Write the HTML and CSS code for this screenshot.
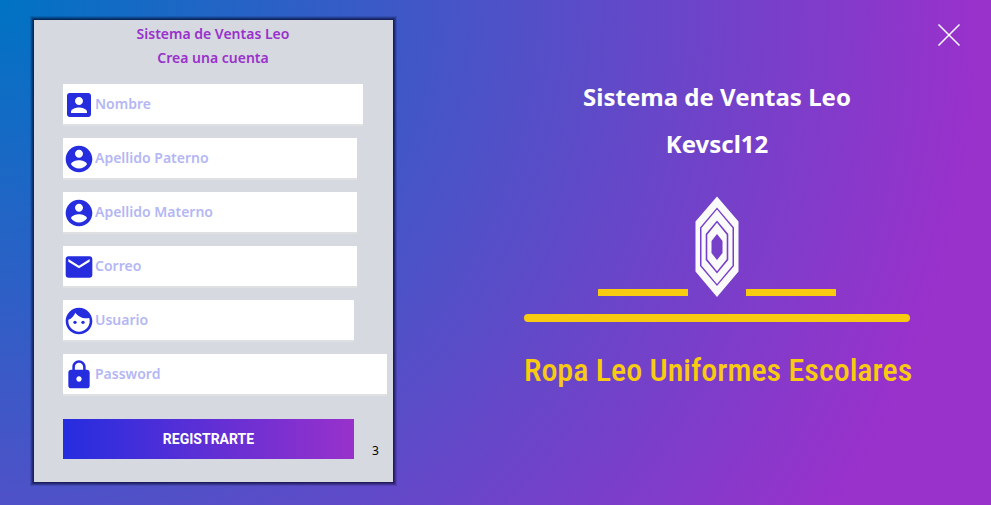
FILE: index.html
```html
<!DOCTYPE html>
<html lang="es">
<head>
<meta charset="utf-8">
<meta name="viewport" content="width=device-width, initial-scale=1">
<title>Sistema de Ventas Leo</title>
<link rel="stylesheet" href="styles.css">
</head>
<body>
<main class="page">
  <form class="card">
    <header class="card-head">
      <h2>Sistema de Ventas Leo</h2>
      <h2>Crea una cuenta</h2>
    </header>
    <div class="fields">
      <label class="field field-name">
        <svg class="icon" viewBox="0 0 24 24" aria-hidden="true"><path d="M3 5v14c0 1.100.89 2 2 2h14c1.100 0 2-.9 2-2V5c0-1.100-.9-2-2-2H5c-1.110 0-2 .9-2 2zm12 4c0 1.660-1.340 3-3 3s-3-1.340-3-3 1.340-3 3-3 3 1.340 3 3zm-9 8c0-2 4-3.100 6-3.100s6 1.100 6 3.100v1H6v-1z"/></svg>
        <input type="text" placeholder="Nombre" aria-label="Nombre">
      </label>
      <label class="field">
        <svg class="icon" viewBox="0 0 24 24" aria-hidden="true"><path d="M12 2C6.480 2 2 6.480 2 12s4.480 10 10 10 10-4.480 10-10S17.520 2 12 2zm0 3c1.660 0 3 1.340 3 3s-1.340 3-3 3-3-1.340-3-3 1.340-3 3-3zm0 14.200c-2.500 0-4.710-1.280-6-3.220.03-1.990 4-3.080 6-3.080 1.990 0 5.970 1.090 6 3.080-1.290 1.940-3.500 3.220-6 3.220z"/></svg>
        <input type="text" placeholder="Apellido Paterno" aria-label="Apellido Paterno">
      </label>
      <label class="field">
        <svg class="icon" viewBox="0 0 24 24" aria-hidden="true"><path d="M12 2C6.480 2 2 6.480 2 12s4.480 10 10 10 10-4.480 10-10S17.520 2 12 2zm0 3c1.660 0 3 1.340 3 3s-1.340 3-3 3-3-1.340-3-3 1.340-3 3-3zm0 14.200c-2.500 0-4.710-1.280-6-3.220.03-1.990 4-3.080 6-3.080 1.990 0 5.970 1.090 6 3.080-1.290 1.940-3.500 3.220-6 3.220z"/></svg>
        <input type="text" placeholder="Apellido Materno" aria-label="Apellido Materno">
      </label>
      <label class="field">
        <svg class="icon" viewBox="0 0 24 24" aria-hidden="true"><path d="M20 4H4c-1.100 0-1.990.9-1.990 2L2 18c0 1.100.9 2 2 2h16c1.100 0 2-.9 2-2V6c0-1.100-.9-2-2-2zm0 4l-8 5-8-5V6l8 5 8-5v2z"/></svg>
        <input type="email" placeholder="Correo" aria-label="Correo">
      </label>
      <label class="field field-user">
        <svg class="icon" viewBox="0 0 24 24" aria-hidden="true"><circle cx="9" cy="13" r="1.250"/><circle cx="15" cy="13" r="1.250"/><path d="M12 2C6.480 2 2 6.480 2 12s4.480 10 10 10 10-4.480 10-10S17.520 2 12 2zm0 18c-4.410 0-8-3.590-8-8 0-.29.02-.58.05-.86 2.360-1.050 4.230-2.980 5.210-5.370C11.070 8.330 14.050 10 17.420 10c.78 0 1.530-.09 2.250-.26.21.71.33 1.470.33 2.260 0 4.410-3.590 8-8 8z"/></svg>
        <input type="text" placeholder="Usuario" aria-label="Usuario">
      </label>
      <label class="field field-password">
        <svg class="icon" viewBox="0 0 24 24" aria-hidden="true"><path d="M18 8h-1V6c0-2.760-2.240-5-5-5S7 3.240 7 6v2H6c-1.100 0-2 .9-2 2v10c0 1.100.9 2 2 2h12c1.100 0 2-.9 2-2V10c0-1.100-.9-2-2-2zm-6 9c-1.100 0-2-.9-2-2s.9-2 2-2 2 .9 2 2-.9 2-2 2zm3.100-9H8.900V6c0-1.710 1.390-3.100 3.100-3.100 1.710 0 3.100 1.390 3.100 3.100v2z"/></svg>
        <input type="password" placeholder="Password" aria-label="Password">
      </label>
    </div>
    <footer class="card-foot">
      <button class="submit" type="button">REGISTRARTE</button>
      <span class="count">3</span>
    </footer>
  </form>
  <section class="brand">
    <h1>Sistema de Ventas Leo</h1>
    <h1>Kevscl12</h1>
    <div class="logo">
      <svg class="emblem" viewBox="0 0 386 126" aria-hidden="true">
        <path class="gem" fill-rule="evenodd" d="M193 0.500l21.500 25v50L193 101l-21.500-25.500v-50zM193 11.500l-17 20v38.500L193 90l17-20V31.500zM193 13.500l15.500 18.500v37.500L193 88l-15.500-18.500V32zM193 24.500l-11.300 13.500v26L193 77.500l11.300-13.500V38zM193 26.800l9.700 12v24.500l-9.700 12-9.700-12V38.800zM193 38l-5.500 7v12l5.500 7 5.500-7V45z"/>
        <path class="gold" d="M74 93h90v7H74zM222 93h90v7h-90z"/>
        <rect class="gold" y="118" width="386" height="8" rx="4"/>
      </svg>
      <p class="logo-text">Ropa Leo Uniformes Escolares</p>
    </div>
  </section>
  <button class="close" type="button" aria-label="Cerrar">
    <svg viewBox="0 0 24 24" aria-hidden="true"><path d="M1.500 1.500l21 21M22.500 1.500l-21 21"/></svg>
  </button>
</main>
</body>
</html>
```
FILE: styles.css
```css
* {
  box-sizing: border-box;
}

body {
  margin: 0;
  font-family: "Noto Sans", sans-serif;
}

h1,
h2,
p {
  margin: 0;
}

.page {
  position: relative;
  display: flex;
  align-items: flex-start;
  gap: 50px;
  min-height: 100vh;
  padding: 20px 0 20px 34px;
  background: radial-gradient(circle 980px at 0 0, #0073c3, #9931cb);
}

.card {
  flex: 0 0 359px;
  padding: 2px 6px 23px 29px;
  background: #d6d9e0;
  box-shadow:
    0 0 0 1px rgba(0, 0, 30, 0.3),
    0 0 0 2px rgba(0, 0, 30, 0.25),
    0 0 0 3px rgba(0, 0, 30, 0.2),
    0 0 0 4px rgba(0, 0, 30, 0.12);
}

.card-head {
  margin-right: 24px;
  text-align: center;
  color: #9931cb;
}

.card-head h2 {
  font-size: 14px;
  font-weight: 600;
  line-height: 24px;
}

.fields {
  display: grid;
  gap: 14px;
  margin-top: 14px;
}

.field {
  display: flex;
  align-items: center;
  width: 294px;
  height: 40px;
  background: #fff;
  box-shadow: 0 2px #dfe0e2;
}

.field-name {
  width: 300px;
}

.field-user {
  width: 291px;
}

.field-password {
  width: 324px;
}

.icon {
  flex: none;
  width: 32px;
  height: 32px;
  margin-top: 2px;
  fill: #252ddf;
}

.field input {
  flex: 1;
  min-width: 0;
  height: 40px;
  padding: 0;
  border: 0;
  outline: 0;
  background: transparent;
  color: #252ddf;
  font: 600 14px/40px "Noto Sans", sans-serif;
}

.field input::placeholder {
  color: #b4b7f4;
  opacity: 1;
}

.card-foot {
  display: flex;
  align-items: flex-end;
  gap: 18px;
  margin-top: 25px;
}

.submit {
  width: 291px;
  height: 40px;
  padding: 0;
  border: 0;
  background: linear-gradient(90deg, #252ddf, #9931cb);
  color: #fff;
  font: 700 14px/40px Roboto, sans-serif;
}

.count {
  font-size: 12px;
  line-height: 16px;
}

.brand {
  flex: 1;
  display: flex;
  flex-direction: column;
  align-items: center;
  padding-top: 53px;
  color: #fff;
  text-align: center;
}

.brand h1 {
  font-size: 24px;
  font-weight: 700;
  line-height: 47px;
}

.logo {
  width: 386px;
  margin-top: 29px;
}

.emblem {
  display: block;
  width: 100%;
}

.gem {
  fill: #fafafa;
}

.gold {
  fill: #f9cb10;
}

.logo-text {
  color: #f9cb10;
  font-family: "Roboto Condensed", "Open Sans Condensed", "DejaVu Sans Condensed", sans-serif;
  font-size: 32px;
  font-weight: 500;
  line-height: 96px;
  white-space: nowrap;
}

.close {
  position: absolute;
  top: 23px;
  right: 30px;
  width: 24px;
  height: 24px;
  padding: 0;
  border: 0;
  background: transparent;
}

.close svg {
  display: block;
  fill: none;
  stroke: #fff;
  stroke-width: 1.5;
}
```
